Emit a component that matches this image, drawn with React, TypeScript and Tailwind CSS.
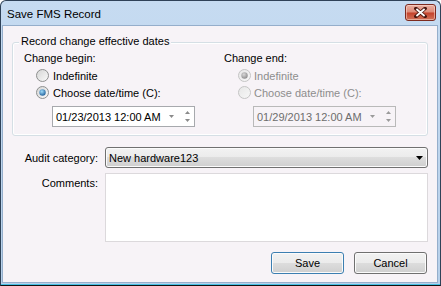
import React from 'react';

const font = { fontFamily: '"Liberation Sans", Arial, sans-serif' };

function Radio({ checked = false, disabled = false }: { checked?: boolean; disabled?: boolean }) {
  const ring = disabled ? '#c4c4c4' : '#8e8f8f';
  const id = `${checked ? 'c' : 'u'}${disabled ? 'd' : 'e'}`;
  return (
    <svg width="13" height="13" viewBox="0 0 13 13" className="shrink-0">
      <defs>
        <linearGradient id={`rf-${id}`} x1="0" y1="0" x2="1" y2="1">
          <stop offset="0" stopColor={disabled ? '#e6e6e6' : '#d4d4d4'} />
          <stop offset="1" stopColor={disabled ? '#f8f8f8' : '#fbfbfb'} />
        </linearGradient>
        <radialGradient id={`rd-${id}`} cx="0.4" cy="0.35" r="0.7">
          <stop offset="0" stopColor={disabled ? '#d8d8d8' : '#9fdcfb'} />
          <stop offset="1" stopColor={disabled ? '#8a8a8a' : '#1e5d99'} />
        </radialGradient>
      </defs>
      <circle cx="6.5" cy="6.5" r="6" fill={`url(#rf-${id})`} stroke={ring} />
      {checked && <circle cx="6.5" cy="6.5" r="3.2" fill={`url(#rd-${id})`} />}
    </svg>
  );
}

function DateBox({ value, disabled = false }: { value: string; disabled?: boolean }) {
  const mark = disabled ? '#9a9a9a' : '#8a8a8a';
  return (
    <div
      className={`flex items-center w-[143px] h-[21px] border pl-[3px] pr-[3px] text-[11px] leading-[14px] ${
        disabled ? 'border-[#b9b9b9] bg-[#f7f3f7] text-[#6d6d6d]' : 'border-[#a7a9ad] bg-white text-black'
      }`}
    >
      <span>{value}</span>
      <svg width="5" height="3" viewBox="0 0 5 3" className="ml-auto">
        <path d="M0 0 L5 0 L2.5 3 Z" fill={mark} />
      </svg>
      <svg width="7" height="13" viewBox="0 0 7 13" className="ml-[10px]">
        <path d="M3.5 1 L6 4 L1 4 Z" fill={mark} />
        <path d="M1 9 L6 9 L3.5 12 Z" fill={mark} />
      </svg>
    </div>
  );
}

const btnBg =
  'bg-[linear-gradient(#f2f2f2_0%,#ebebeb_50%,#dddddd_50%,#cfcfcf_100%)] shadow-[inset_0_0_0_1px_#fbfbfb]';

export default function App() {
  return (
    <div className="w-[441px] h-[286px] bg-white overflow-hidden text-black" style={font}>
      <div className="h-full flex flex-col rounded-t-[6px] border border-[#2f4258] border-b-[#111111] bg-gradient-to-b from-[#c6dbf1] to-[#b7d0ea] pl-[1px] pr-[2px] pb-[2px] shadow-[inset_0_-1px_0_#45c0e4]">
        {/* title bar */}
        <div className="h-[24px] flex items-start pl-[5px] pr-[2px]">
          <span className="mt-[6px] text-[11.5px] leading-[14px] text-black">Save FMS Record</span>
          <div className="ml-auto mt-[3px] w-[31px] h-[17px] rounded-[3px] border border-[#7d2a1f] bg-[linear-gradient(#eab0a2_0%,#dd8a77_48%,#c4412a_52%,#d0735a_100%)] shadow-[inset_0_0_0_1px_rgba(255,230,220,0.5)] flex items-center justify-center">
            <svg width="13" height="11" viewBox="0 0 13 11">
              <path d="M2 1.5 L11 9.5 M11 1.5 L2 9.5" stroke="#4b1810" strokeWidth="3.6" strokeLinecap="square" />
              <path d="M2.4 2 L10.6 9 M10.6 2 L2.4 9" stroke="#ffffff" strokeWidth="1.8" />
            </svg>
          </div>
        </div>

        {/* client area */}
        <div className="flex-1 flex flex-col border border-[#95aecb] bg-[#f7f3f7]">
          {/* group box */}
          <div className="relative mt-[16px] mx-[9px] h-[94px] rounded-[3px] border border-[#d5dfe5] shadow-[inset_0_0_0_1px_#ffffff] pt-[8px] pl-[11px] flex">
            <span className="absolute left-[6px] -top-[9px] px-[2px] bg-[#f7f3f7] text-[11px] leading-[14px]">
              Record change effective dates
            </span>

            <div className="w-[200px] flex flex-col text-[11px] leading-[14px]">
              <div className="h-[14px]">Change begin:</div>
              <div className="mt-[2px] h-[17px] flex items-center pl-[12px] gap-[4px]">
                <Radio />
                <span>Indefinite</span>
              </div>
              <div className="h-[17px] flex items-center pl-[12px] gap-[4px]">
                <Radio checked />
                <span>Choose date/time (C):</span>
              </div>
              <div className="mt-[5px] ml-[28px]">
                <DateBox value="01/23/2013 12:00 AM" />
              </div>
            </div>

            <div className="flex-1 flex flex-col text-[11px] leading-[14px]">
              <div className="h-[14px]">Change end:</div>
              <div className="mt-[2px] h-[17px] flex items-center pl-[14px] gap-[3px] text-[#8d8d8d]">
                <Radio checked disabled />
                <span>Indefinite</span>
              </div>
              <div className="h-[17px] flex items-center pl-[14px] gap-[3px] text-[#8d8d8d]">
                <Radio disabled />
                <span>Choose date/time (C):</span>
              </div>
              <div className="mt-[5px] ml-[29px]">
                <DateBox value="01/29/2013 12:00 AM" disabled />
              </div>
            </div>
          </div>

          {/* audit category */}
          <div className="mt-[11px] flex items-center text-[11px] leading-[14px]">
            <span className="w-[95px] text-right">Audit category:</span>
            <div className={`ml-[7px] mr-[9px] flex-1 h-[21px] rounded-[3px] border border-[#707070] ${btnBg} flex items-center pl-[3px] pr-[4px]`}>
              <span>New hardware123</span>
              <svg width="7" height="4" viewBox="0 0 7 4" className="ml-auto">
                <path d="M0 0 L7 0 L3.5 4 Z" fill="#000000" />
              </svg>
            </div>
          </div>

          {/* comments */}
          <div className="mt-[5px] flex items-start text-[11px] leading-[14px]">
            <span className="w-[95px] text-right pt-[3px]">Comments:</span>
            <div className="ml-[7px] mr-[9px] flex-1 h-[69px] border border-[#dcd9dc] bg-white" />
          </div>

          {/* buttons */}
          <div className="mt-[10px] flex justify-end gap-[10px] pr-[10px] text-[11px] leading-[14px]">
            <button className={`w-[73px] h-[22px] rounded-[3px] border border-[#3c7fb1] ${btnBg} shadow-[inset_0_0_0_1px_#c7e6f8]`}>
              Save
            </button>
            <button className={`w-[73px] h-[22px] rounded-[3px] border border-[#707070] ${btnBg}`}>
              Cancel
            </button>
          </div>
        </div>
      </div>
    </div>
  );
}
